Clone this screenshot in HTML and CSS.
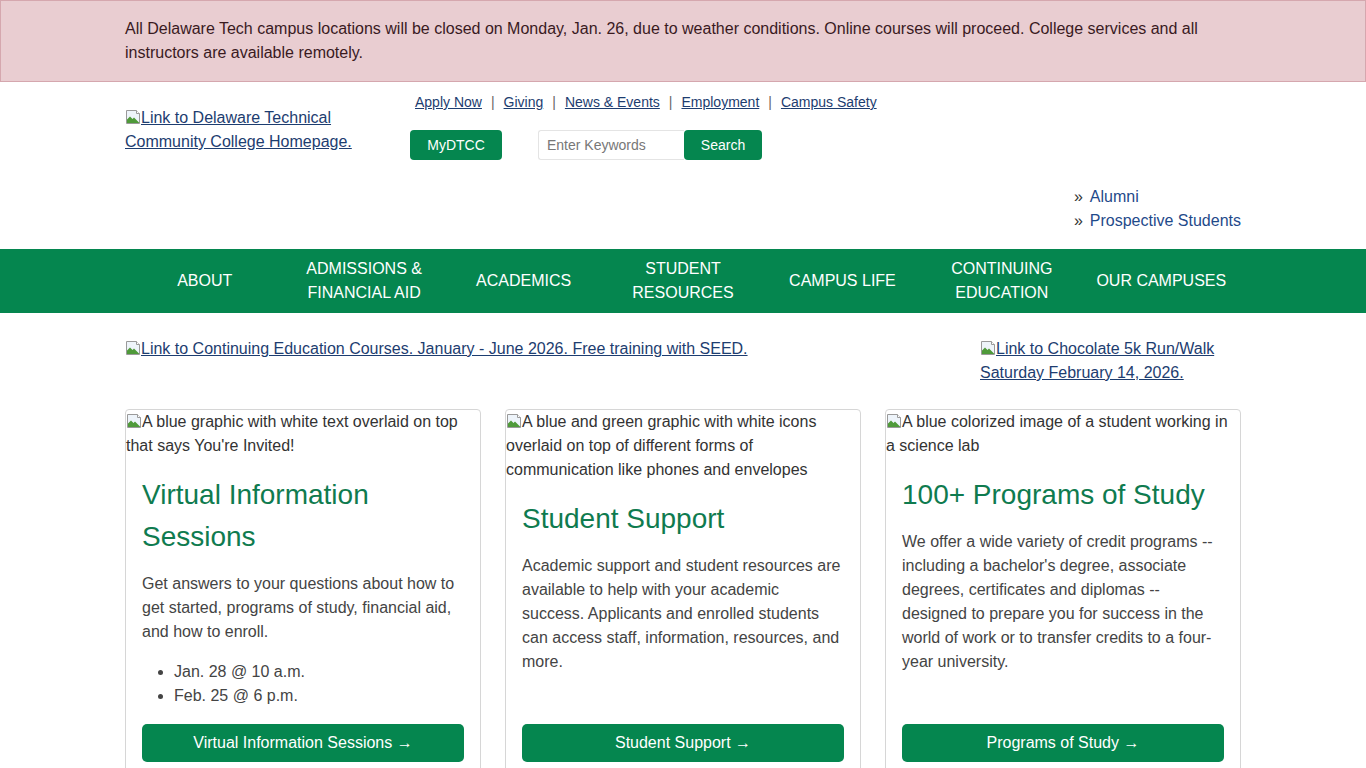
FILE: index.html
```html
<!DOCTYPE html>
<html lang="en">
<head>
<meta charset="utf-8">
<title>Delaware Technical Community College</title>
<link rel="stylesheet" href="styles.css">
</head>
<body>
<div class="alert">
  <div class="container">
    <p>All Delaware Tech campus locations will be closed on Monday, Jan. 26, due to weather conditions. Online courses will proceed. College services and all instructors are available remotely.</p>
  </div>
</div>

<header class="header">
  <div class="container">
    <div class="header-top">
      <div class="logo">
        <a href="#"><svg class="broken" width="16" height="16" viewBox="0 0 16 16" aria-hidden="true"><path d="M1.5 1.5h10l3 3v10h-13z" fill="#eef4fa" stroke="#9a9a9a"/><path d="M2 14v-3.5l3-3 2.5 2.5 1.5-1.5 5.5 5.5z" fill="#4f9a3a"/><path d="M11.5 1.5v3h3" fill="#fff" stroke="#9a9a9a"/></svg>Link to Delaware Technical Community College Homepage.</a>
      </div>
      <div class="utility">
        <ul class="util-links">
          <li><a href="#">Apply Now</a></li>
          <li><a href="#">Giving</a></li>
          <li><a href="#">News &amp; Events</a></li>
          <li><a href="#">Employment</a></li>
          <li><a href="#">Campus Safety</a></li>
        </ul>
        <div class="tools">
          <a class="btn-my" href="#">MyDTCC</a>
          <form class="search">
            <input class="search-input" type="text" placeholder="Enter Keywords">
            <button class="search-btn" type="button">Search</button>
          </form>
        </div>
      </div>
    </div>
    <div class="audience-wrap">
      <ul class="audience">
        <li><a href="#">Alumni</a></li>
        <li><a href="#">Prospective Students</a></li>
      </ul>
    </div>
  </div>
</header>

<nav class="nav">
  <ul class="container">
    <li><a href="#">About</a></li>
    <li><a href="#">Admissions &amp; Financial Aid</a></li>
    <li><a href="#">Academics</a></li>
    <li><a href="#">Student Resources</a></li>
    <li><a href="#">Campus Life</a></li>
    <li><a href="#">Continuing Education</a></li>
    <li><a href="#">Our Campuses</a></li>
  </ul>
</nav>

<main class="container">
  <div class="promo">
    <a class="promo-left" href="#"><svg class="broken" width="16" height="16" viewBox="0 0 16 16" aria-hidden="true"><path d="M1.5 1.5h10l3 3v10h-13z" fill="#eef4fa" stroke="#9a9a9a"/><path d="M2 14v-3.5l3-3 2.5 2.5 1.5-1.5 5.5 5.5z" fill="#4f9a3a"/><path d="M11.5 1.5v3h3" fill="#fff" stroke="#9a9a9a"/></svg>Link to Continuing Education Courses. January - June 2026. Free training with SEED.</a>
    <a class="promo-right" href="#"><svg class="broken" width="16" height="16" viewBox="0 0 16 16" aria-hidden="true"><path d="M1.5 1.5h10l3 3v10h-13z" fill="#eef4fa" stroke="#9a9a9a"/><path d="M2 14v-3.5l3-3 2.5 2.5 1.5-1.5 5.5 5.5z" fill="#4f9a3a"/><path d="M11.5 1.5v3h3" fill="#fff" stroke="#9a9a9a"/></svg>Link to Chocolate 5k Run/Walk Saturday February 14, 2026.</a>
  </div>

  <div class="cards">
    <article class="card">
      <div class="card-img"><svg class="broken" width="16" height="16" viewBox="0 0 16 16" aria-hidden="true"><path d="M1.5 1.5h10l3 3v10h-13z" fill="#eef4fa" stroke="#9a9a9a"/><path d="M2 14v-3.5l3-3 2.5 2.5 1.5-1.5 5.5 5.5z" fill="#4f9a3a"/><path d="M11.5 1.5v3h3" fill="#fff" stroke="#9a9a9a"/></svg>A blue graphic with white text overlaid on top that says You're Invited!</div>
      <div class="card-body">
        <h3 class="card-title">Virtual Information Sessions</h3>
        <p>Get answers to your questions about how to get started, programs of study, financial aid, and how to enroll.</p>
        <ul>
          <li>Jan. 28 @ 10 a.m.</li>
          <li>Feb. 25 @ 6 p.m.</li>
        </ul>
        <a class="btn" href="#">Virtual Information Sessions →</a>
      </div>
    </article>
    <article class="card">
      <div class="card-img"><svg class="broken" width="16" height="16" viewBox="0 0 16 16" aria-hidden="true"><path d="M1.5 1.5h10l3 3v10h-13z" fill="#eef4fa" stroke="#9a9a9a"/><path d="M2 14v-3.5l3-3 2.5 2.5 1.5-1.5 5.5 5.5z" fill="#4f9a3a"/><path d="M11.5 1.5v3h3" fill="#fff" stroke="#9a9a9a"/></svg>A blue and green graphic with white icons overlaid on top of different forms of communication like phones and envelopes</div>
      <div class="card-body">
        <h3 class="card-title">Student Support</h3>
        <p>Academic support and student resources are available to help with your academic success. Applicants and enrolled students can access staff, information, resources, and more.</p>
        <a class="btn" href="#">Student Support →</a>
      </div>
    </article>
    <article class="card">
      <div class="card-img"><svg class="broken" width="16" height="16" viewBox="0 0 16 16" aria-hidden="true"><path d="M1.5 1.5h10l3 3v10h-13z" fill="#eef4fa" stroke="#9a9a9a"/><path d="M2 14v-3.5l3-3 2.5 2.5 1.5-1.5 5.5 5.5z" fill="#4f9a3a"/><path d="M11.5 1.5v3h3" fill="#fff" stroke="#9a9a9a"/></svg>A blue colorized image of a student working in a science lab</div>
      <div class="card-body">
        <h3 class="card-title">100+ Programs of Study</h3>
        <p>We offer a wide variety of credit programs -- including a bachelor's degree, associate degrees, certificates and diplomas -- designed to prepare you for success in the world of work or to transfer credits to a four-year university.</p>
        <a class="btn" href="#">Programs of Study →</a>
      </div>
    </article>
  </div>
</main>
</body>
</html>
```

FILE: styles.css
```css
* { box-sizing: border-box; }

body {
  margin: 0;
  font-family: "Liberation Sans", Arial, sans-serif;
  font-size: 16px;
  line-height: 1.5;
  color: #333;
  background: #fff;
}

a { color: #1d3d70; }

.container {
  width: 1116px;
  margin: 0 auto;
}

.broken {
  vertical-align: -2px;
}

/* Alert */
.alert {
  background: #e9cdd1;
  border: 1px solid #d5a7ae;
  color: #3a1a1f;
  padding: 16px 0;
}
.alert p { margin: 0; }

/* Header */
.header { padding: 10px 0 16px; }

.header-top { display: flex; }

.logo {
  width: 285px;
  padding-top: 14px;
}
.logo a { display: block; }

.utility {
  display: flex;
  flex-direction: column;
  gap: 18px;
}

.util-links {
  display: flex;
  list-style: none;
  margin: 0;
  padding: 0 0 0 5px;
  font-size: 14px;
  line-height: 20px;
}
.util-links li + li::before {
  content: "|";
  color: #666;
  margin: 0 9px;
}

.tools {
  display: flex;
  align-items: center;
}

.btn-my {
  display: flex;
  align-items: center;
  justify-content: center;
  width: 92px;
  height: 30px;
  background: #05864f;
  color: #fff;
  border-radius: 4px;
  font-size: 14px;
  text-decoration: none;
}

.search {
  display: flex;
  margin: 0 0 0 36px;
}

.search-input {
  width: 146px;
  height: 30px;
  border: 1px solid #e4e4e4;
  border-right: 0;
  border-radius: 3px 0 0 3px;
  padding: 0 8px;
  font: 14px "Liberation Sans", Arial, sans-serif;
  color: #333;
}
.search-input::placeholder { color: #777; }

.search-btn {
  width: 78px;
  height: 30px;
  border: 0;
  border-radius: 4px;
  background: #05864f;
  color: #fff;
  font: 14px "Liberation Sans", Arial, sans-serif;
}

.audience-wrap {
  display: flex;
  justify-content: flex-end;
  margin-top: 25px;
}
.audience {
  list-style: none;
  margin: 0;
  padding: 0;
}
.audience li::before {
  content: "»";
  color: #333;
  margin-right: 7px;
}
.audience a {
  color: #1f4a8a;
  text-decoration: none;
}

/* Nav */
.nav { background: #05864f; }
.nav ul {
  display: grid;
  grid-template-columns: repeat(7, 1fr);
  height: 64px;
  list-style: none;
  padding: 0;
}
.nav li {
  display: flex;
  align-items: center;
  justify-content: center;
  text-align: center;
}
.nav a {
  color: #fff;
  text-decoration: none;
  text-transform: uppercase;
  padding: 0 10px;
}

/* Promo */
.promo {
  display: flex;
  justify-content: space-between;
  align-items: flex-start;
  padding: 24px 0;
}
.promo-right { width: 261px; }

/* Cards */
.cards {
  display: grid;
  grid-template-columns: repeat(3, 1fr);
  gap: 24px;
}

.card {
  display: flex;
  flex-direction: column;
  border: 1px solid #d6d6d6;
  border-radius: 4px;
}

.card-img { color: #333; }

.card-body {
  flex: 1;
  display: flex;
  flex-direction: column;
  padding: 16px;
}

.card-title {
  margin: 0 0 14px;
  font-size: 28px;
  line-height: 42px;
  font-weight: normal;
  color: #0f7b4f;
}

.card-body p {
  margin: 0 0 16px;
  color: #444;
}

.card-body ul {
  margin: 0 0 16px;
  padding-left: 32px;
  color: #444;
}

.btn {
  display: block;
  margin-top: auto;
  height: 38px;
  line-height: 38px;
  text-align: center;
  background: #05864f;
  color: #fff;
  border-radius: 5px;
  text-decoration: none;
}
```
